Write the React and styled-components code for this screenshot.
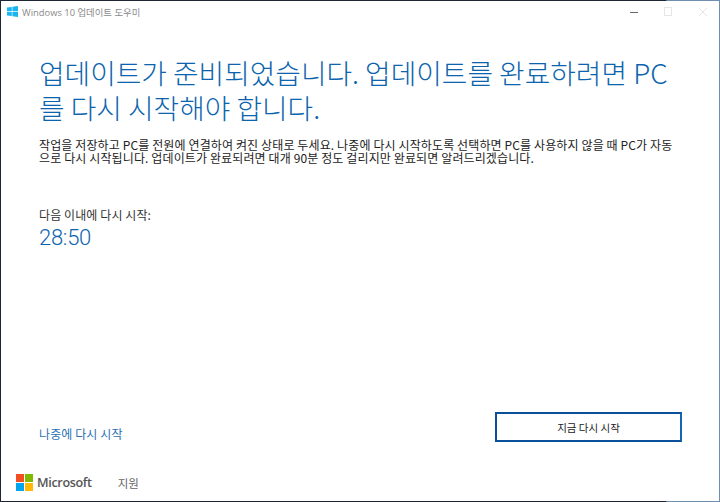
import React from "react";
import styled, { createGlobalStyle } from "styled-components";

const Global = createGlobalStyle`
  html, body { margin: 0; padding: 0; width: 720px; height: 502px; overflow: hidden; background: #fff; }
  body { font-family: "Noto Sans CJK KR", "Open Sans", sans-serif; }
`;
const Win = styled.div`
  width: 720px; height: 502px; box-sizing: border-box; background: #fff;
  border-style: solid; border-width: 1px;
  border-image: linear-gradient(90deg, #1c2733 0%, #1c2733 92.5%, #6f8fb0 92.6%, #6f8fb0 100%) 1;
  display: flex; flex-direction: column;
`;
const TitleBar = styled.header`
  height: 21px; flex: none; display: flex; align-items: center; padding-left: 6px;
`;
const TitleText = styled.span`
  margin-left: 4px; font: 9.4px "Open Sans", "Noto Sans CJK KR", sans-serif; color: #8a8a8a; white-space: nowrap;
`;
const Controls = styled.div`
  margin-left: auto; display: flex; align-items: center; gap: 25px; padding-right: 11px;
`;
const Main = styled.main`
  flex: 1; display: flex; flex-direction: column; padding: 33px 37px 0 38px; min-height: 0;
`;
const Heading = styled.h1`
  margin: 0; font: 300 27.8px/35px "Noto Sans CJK KR", sans-serif; color: #0b64ad;
`;
const Body = styled.p`
  margin: 13px 0 0; font: 400 12px/13px "Noto Sans CJK KR", sans-serif; color: #222; width: 638px; letter-spacing: .12px;
`;
const Label = styled.div`
  margin-top: 43px; font: 400 12px/16px "Noto Sans CJK KR", sans-serif; color: #333; letter-spacing: .1px;
`;
const Timer = styled.div`
  font: 300 22px/30px Roboto, "Open Sans", sans-serif; color: #0b64ad; letter-spacing: -.3px;
`;
const Actions = styled.div`
  margin-top: auto; display: flex; align-items: flex-start; justify-content: space-between;
`;
const LaterLink = styled.a`
  margin-top: 14px; font: 400 12px/16px "Noto Sans CJK KR", sans-serif; color: #2a70b4; letter-spacing: .1px;
`;
const RestartBtn = styled.button`
  width: 187px; height: 30px; box-sizing: border-box; background: #fff; border: 2px solid #0a4f9a; border-right-color: #1268b3;
  font: 400 10.5px "Noto Sans CJK KR", sans-serif; color: #222; padding: 0;
`;
const Footer = styled.footer`
  height: 37px; flex: none; margin-top: 22px; display: flex; align-items: center; padding-left: 15px;
`;
const Brand = styled.span`
  margin-left: 4px; font: 600 12.6px "Open Sans", sans-serif; color: #555; letter-spacing: -0.35px;
`;
const Support = styled.span`
  margin-left: 26px; font: 400 11.5px "Noto Sans CJK KR", sans-serif; color: #666;
`;

const WinLogo = () => (
  <svg width="11" height="11" viewBox="0 0 11 11" fill="#19b5f1">
    <path d="M0 1.6 4.8.9v4.2H0zM5.4.8 11 0v5.1H5.4zM0 5.8h4.8v4.3L0 9.4zM5.4 5.8H11V11l-5.6-.8z" />
  </svg>
);
const MsLogo = () => (
  <svg width="17" height="17" viewBox="0 0 17 17">
    <rect width="8" height="8" fill="#f25022" />
    <rect x="9" width="8" height="8" fill="#7fba00" />
    <rect y="9" width="8" height="8" fill="#00a4ef" />
    <rect x="9" y="9" width="8" height="8" fill="#ffb900" />
  </svg>
);

export default function App() {
  return (
    <Win>
      <Global />
      <TitleBar>
        <WinLogo />
        <TitleText>Windows 10 업데이트 도우미</TitleText>
        <Controls>
          <svg width="10" height="10"><rect x="2" y="5" width="8" height="1" fill="#666" /></svg>
          <svg width="10" height="10"><rect x="1.5" y=".5" width="7" height="8" fill="none" stroke="#e6e6e6" /></svg>
          <svg width="10" height="10"><path d="M1 1l8 8M9 1l-8 8" stroke="#e6e6e6" fill="none" /></svg>
        </Controls>
      </TitleBar>
      <Main>
        <Heading>업데이트가 준비되었습니다. 업데이트를 완료하려면 PC를 다시 시작해야 합니다.</Heading>
        <Body>작업을 저장하고 PC를 전원에 연결하여 켜진 상태로 두세요. 나중에 다시 시작하도록 선택하면 PC를 사용하지 않을 때 PC가 자동으로 다시 시작됩니다. 업데이트가 완료되려면 대개 90분 정도 걸리지만 완료되면 알려드리겠습니다.</Body>
        <Label>다음 이내에 다시 시작:</Label>
        <Timer>28:50</Timer>
        <Actions>
          <LaterLink>나중에 다시 시작</LaterLink>
          <RestartBtn>지금 다시 시작</RestartBtn>
        </Actions>
      </Main>
      <Footer>
        <MsLogo />
        <Brand>Microsoft</Brand>
        <Support>지원</Support>
      </Footer>
    </Win>
  );
}
